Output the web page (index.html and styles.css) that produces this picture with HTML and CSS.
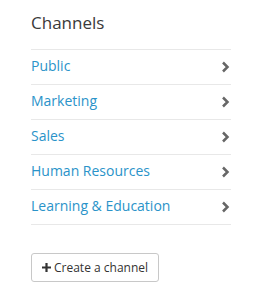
FILE: index.html
```html
<!DOCTYPE html>
<html lang="en">
<head>
    <meta charset="UTF-8">
    <meta name="viewport" content="width=device-width, initial-scale=1.0">
    <title>Channels</title>
    <link rel="stylesheet" href="styles.css">
</head>
<body>
    <div class="panel">
        <h2 class="title">Channels</h2>
        <ul class="channels">
            <li><a href="#">Public</a><span class="chevron"><svg width="9" height="12" viewBox="0 0 9 12"><path d="M2 1.5 L6.5 6 L2 10.5" fill="none" stroke="#666" stroke-width="2.5"/></svg></span></li>
            <li><a href="#">Marketing</a><span class="chevron"><svg width="9" height="12" viewBox="0 0 9 12"><path d="M2 1.5 L6.5 6 L2 10.5" fill="none" stroke="#666" stroke-width="2.5"/></svg></span></li>
            <li><a href="#">Sales</a><span class="chevron"><svg width="9" height="12" viewBox="0 0 9 12"><path d="M2 1.5 L6.5 6 L2 10.5" fill="none" stroke="#666" stroke-width="2.5"/></svg></span></li>
            <li><a href="#">Human Resources</a><span class="chevron"><svg width="9" height="12" viewBox="0 0 9 12"><path d="M2 1.5 L6.5 6 L2 10.5" fill="none" stroke="#666" stroke-width="2.5"/></svg></span></li>
            <li><a href="#">Learning &amp; Education</a><span class="chevron"><svg width="9" height="12" viewBox="0 0 9 12"><path d="M2 1.5 L6.5 6 L2 10.5" fill="none" stroke="#666" stroke-width="2.5"/></svg></span></li>
        </ul>
        <button class="create"><svg width="9" height="9" viewBox="0 0 9 9"><path d="M4.5 0 V9 M0 4.5 H9" stroke="#333" stroke-width="2.2"/></svg>Create a channel</button>
    </div>
</body>
</html>
```

FILE: styles.css
```css
body {
    margin: 0;
    background: #fff;
    font-family: "Open Sans", sans-serif;
}
.panel {
    padding: 12px 22px 0 31px;
}
.title {
    margin: 0;
    font-size: 17px;
    font-weight: 400;
    color: #3a3a3a;
    line-height: 22px;
    height: 37px;
    border-bottom: 1px solid #e8e8e8;
}
.channels {
    list-style: none;
    margin: 0;
    padding: 0;
}
.channels li {
    display: flex;
    justify-content: space-between;
    align-items: center;
    height: 34px;
    border-bottom: 1px solid #e8e8e8;
}
.channels a {
    color: #2a93c9;
    text-decoration: none;
    font-size: 14px;
    line-height: 18px;
    margin-top: -2px;
}
.chevron {
    display: flex;
    margin-right: 1px;
}
.create {
    margin-top: 28px;
    display: flex;
    align-items: center;
    gap: 3px;
    height: 29px;
    padding: 0 10px;
    background: #fff;
    border: 1px solid #c8c8c8;
    border-radius: 3px;
    font-family: "Open Sans", sans-serif;
    font-size: 12px;
    color: #333;
}
```
